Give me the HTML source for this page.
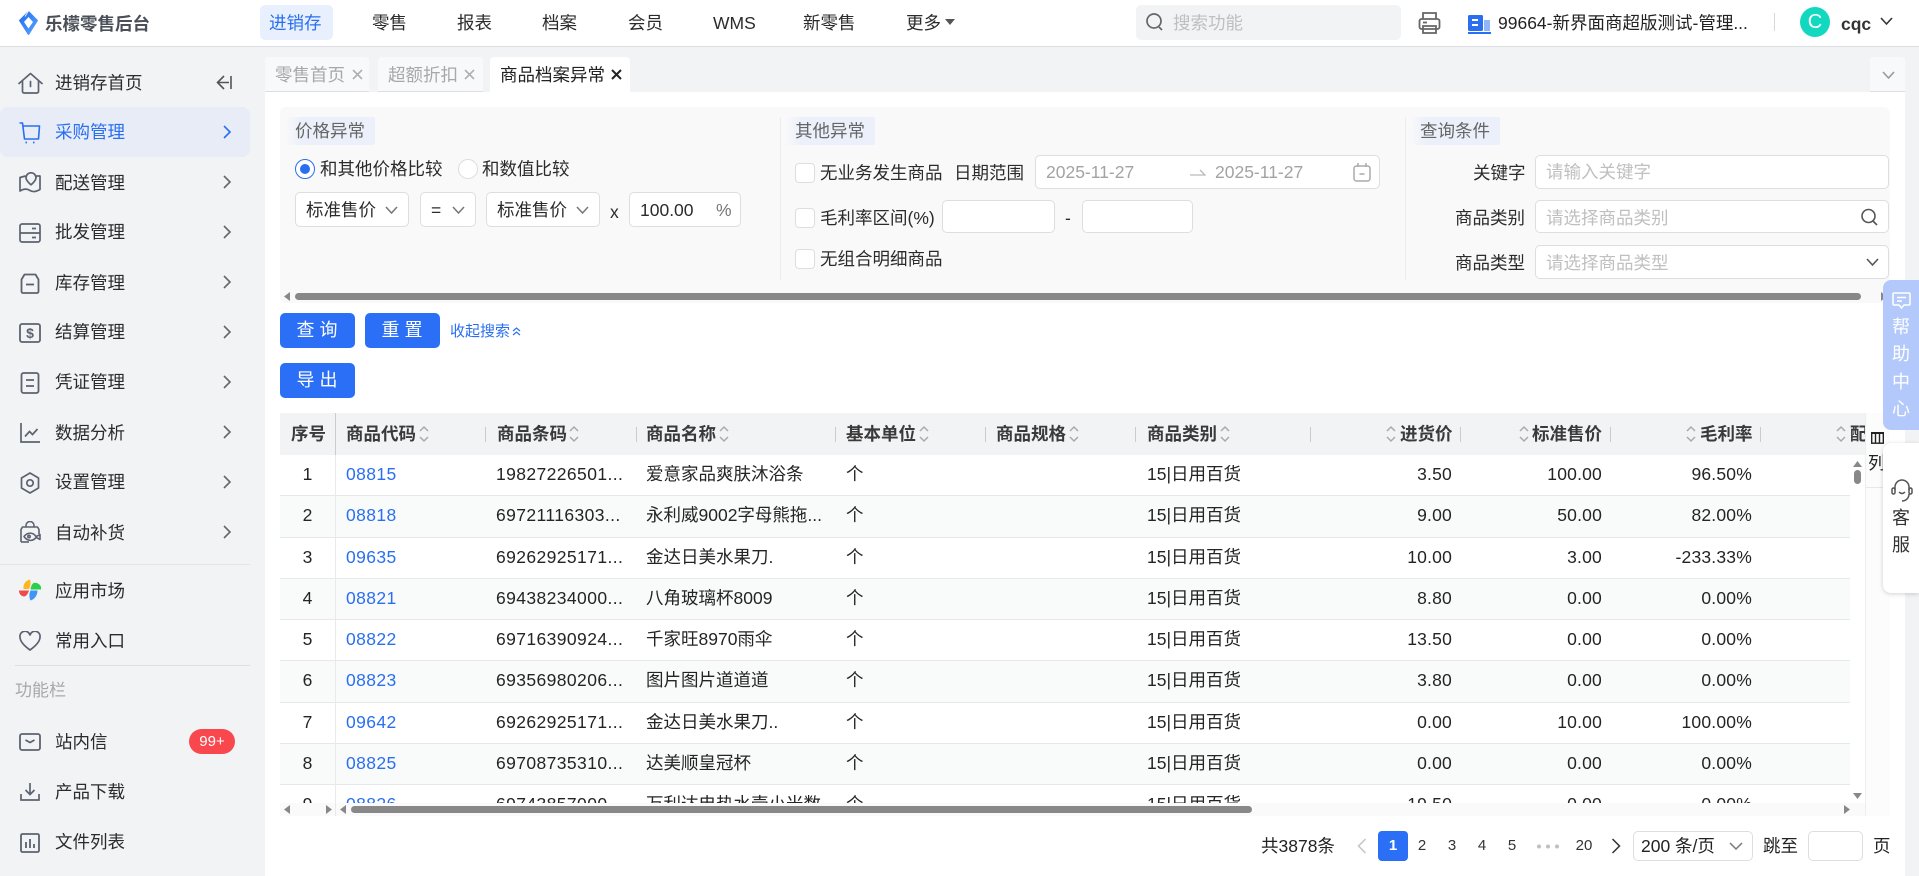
<!DOCTYPE html>
<html lang="zh-CN"><head><meta charset="utf-8"><title>乐檬零售后台</title>
<style>
*{box-sizing:border-box}
html,body{margin:0;padding:0;width:1919px;height:876px;overflow:hidden;background:#fff}
body{position:relative;font-family:"Liberation Sans","Noto Sans CJK SC",sans-serif;font-size:17.5px;color:#2b2b2b}
.t{position:absolute;line-height:24px;white-space:nowrap}
.b{position:absolute;background:#fff;border:1px solid #dcdee2;border-radius:5px}
.a{position:absolute;display:block}
.g{color:#a8a8a8}.ph{color:#bfbfbf}
.sec{position:absolute;top:117px;height:28px;background:linear-gradient(90deg,#f9f9fa,#ebf0fa 18%);border-radius:2px}
.chk{position:absolute;width:20px;height:20px;background:#fff;border:1px solid #dcdee2;border-radius:4px;left:795px}
.btn{position:absolute;width:75px;height:35px;background:#2a6ff5;border-radius:5px;color:#fff;text-align:center;line-height:35px;font-size:18px;letter-spacing:5px;text-indent:4px}
.th{position:absolute;top:0;height:42px;line-height:42px;font-weight:700;color:#3a3a3a;white-space:nowrap}
.sep{position:absolute;top:14px;width:1px;height:15px;background:#c8ccd2}
.r{position:absolute;left:0;width:1570px;height:41.25px;border-bottom:1px solid #e6e8eb;background:#fff}
.r.e{background:#f9fafa}
.r span{position:absolute;top:0;line-height:39px;white-space:nowrap;color:#242424}
.n{width:55px;left:0;text-align:center}
.c{left:66px;color:#2a6ff0!important;letter-spacing:.4px}
.d{left:216px;letter-spacing:.4px}
.m{left:366px}.u{left:566px}.k{left:867px}
.p1,.p2,.p3{text-align:right;width:120px;letter-spacing:.2px}
.p1{left:1052px}.p2{left:1202px}.p3{left:1352px}
.pg{position:absolute;top:834px;line-height:24px;font-size:15px;color:#333;text-align:center;width:30px}
.hc{position:absolute;left:1883px;width:36px;text-align:center;line-height:24px;font-size:18px}
</style></head><body>

<!-- header -->
<div style="position:absolute;left:0;top:46px;width:1919px;height:1px;background:#dcdee2"></div>
<svg class="a" style="left:19px;top:11px" width="19" height="24" viewBox="0 0 19 24"><defs><linearGradient id="lg" x1="0" y1="0" x2="1" y2="1"><stop offset="0" stop-color="#1f6cf0"/><stop offset="1" stop-color="#5aa5ff"/></linearGradient></defs><path d="M9.500 1 L18 9.500 L9.500 23 L1 9.500Z" fill="url(#lg)" stroke="url(#lg)" stroke-width="1.800" stroke-linejoin="round"/><path d="M9.500 6 L14 11 L9.500 17.500 L5 11Z" fill="#fff"/><path d="M9.500 0 L6 5.500" stroke="#fff" stroke-width=".8"/></svg>
<div class="t" style="left:45px;top:12px;font-weight:700;font-size:17.5px;color:#4a4f58">乐檬零售后台</div>
<div style="position:absolute;left:260px;top:5px;width:73px;height:35px;background:#e8f0fd;border-radius:5px"></div>
<div class="t" style="left:269px;top:11px;color:#2a6ff0">进销存</div>
<div class="t" style="left:372px;top:11px">零售</div>
<div class="t" style="left:457px;top:11px">报表</div>
<div class="t" style="left:542px;top:11px">档案</div>
<div class="t" style="left:628px;top:11px">会员</div>
<div class="t" style="left:713px;top:11px">WMS</div>
<div class="t" style="left:803px;top:11px">新零售</div>
<div class="t" style="left:906px;top:11px">更多</div>
<svg class="a" style="left:945px;top:19px" width="10" height="6"><path d="M0 0H10L5 6Z" fill="#555"/></svg>
<div style="position:absolute;left:1136px;top:5px;width:265px;height:35px;background:#f2f3f5;border-radius:5px"></div>
<svg class="a" style="left:1145px;top:12px" width="19" height="20" viewBox="0 0 19 20" fill="none" stroke="#666" stroke-width="1.700"><circle cx="9" cy="9" r="7"/><path d="M14 15l3 3"/></svg>
<div class="t ph" style="left:1173px;top:11px">搜索功能</div>
<svg class="a" style="left:1418px;top:11px" width="23" height="24" viewBox="0 0 23 24" fill="none" stroke="#666" stroke-width="1.800"><path d="M5 8V2h13v6"/><rect x="1.500" y="8" width="20" height="10" rx="2"/><path d="M5 15h13v7H5z"/><path d="M5 11.500h4"/></svg>
<svg class="a" style="left:1468px;top:14px" width="23" height="20" viewBox="0 0 23 20"><rect x="0" y="1" width="15" height="16" rx="1.500" fill="#2a6ff0"/><rect x="16" y="6" width="6" height="11" fill="#8fb6f8"/><rect x="0" y="18" width="23" height="2" fill="#2a6ff0"/><rect x="4" y="5" width="6" height="2" fill="#fff"/><rect x="4" y="10" width="6" height="2" fill="#fff"/></svg>
<div class="t" style="left:1498px;top:11px;color:#222">99664-新界面商超版测试-管理...</div>
<div style="position:absolute;left:1774px;top:13px;width:1px;height:18px;background:#d8d8d8"></div>
<div style="position:absolute;left:1800px;top:7px;width:30px;height:30px;border-radius:50%;background:#13d8c0;color:#fff;text-align:center;line-height:30px;font-size:20px">C</div>
<div class="t" style="left:1841px;top:12px;font-weight:700;color:#333">cqc</div>
<svg class="a" style="left:1880px;top:17px" width="13" height="9" viewBox="0 0 13 9" fill="none" stroke="#333" stroke-width="1.600"><path d="M1 1l5.500 6L12 1"/></svg>

<!-- sidebar -->
<div style="position:absolute;left:0;top:47px;width:265px;height:829px;background:#f2f3f5"></div>
<div style="position:absolute;left:0;top:107px;width:250px;height:50px;background:#e7ecf6;border-radius:8px"></div>

<svg class="a" style="left:18px;top:72px" width="25" height="22" viewBox="0 0 25 22" fill="none" stroke="#5c6270" stroke-width="1.700" stroke-linejoin="round" stroke-linecap="round"><path d="M1 11.500L12.500 1.500 24 11.500"/><path d="M4.500 9.500V19.500a1.500 1.500 0 0 0 1.500 1.500H19a1.500 1.500 0 0 0 1.500-1.500V9.500"/><path d="M12.500 9.500v5"/></svg>
<div class="t" style="left:55px;top:71px">进销存首页</div>
<svg class="a" style="left:216px;top:75px" width="16" height="15" viewBox="0 0 16 15" fill="none" stroke="#555" stroke-width="1.600"><path d="M8 1L1.500 7.500 8 14M1.500 7.500H13M15 1v13"/></svg>

<svg class="a" style="left:19px;top:122px" width="22" height="22" viewBox="0 0 22 22" fill="none" stroke="#2a6ff0" stroke-width="1.600" stroke-linejoin="round"><path d="M.5 1H3.500L5.500 17H19.500L20.500 4H4"/><path d="M6.500 20.500h1.500M14 20.500h1.500" stroke-width="1.800"/></svg>
<div class="t" style="left:55px;top:120px;color:#2a6ff0">采购管理</div>

<svg class="a" style="left:19px;top:172px" width="22" height="21" viewBox="0 0 22 21" fill="none" stroke="#5c6270" stroke-width="1.700" stroke-linejoin="round"><path d="M6.500 4L1 5.500V19C5 16.500 8 16.500 11 18.500 14.500 20.500 17.500 19.500 21 17.500V4H17.500"/><path d="M12 .8a5 5 0 0 0-5 5c0 3 5 7 5 7s5-4 5-7a5 5 0 0 0-5-5z"/></svg>
<div class="t" style="left:55px;top:171px">配送管理</div>

<svg class="a" style="left:19px;top:223px" width="22" height="20" viewBox="0 0 22 20" fill="none" stroke="#5c6270" stroke-width="1.700"><rect x="1" y="1" width="20" height="18" rx="2"/><path d="M1 10h20M13 5.500h4M13 14.500h4"/></svg>
<div class="t" style="left:55px;top:220px">批发管理</div>

<svg class="a" style="left:20px;top:273px" width="20" height="21" viewBox="0 0 20 21" fill="none" stroke="#5c6270" stroke-width="1.800" stroke-linejoin="round"><path d="M4.500 1.500h11l3 5v12a1.500 1.500 0 0 1-1.500 1.500H3a1.500 1.500 0 0 1-1.500-1.500v-12z"/><path d="M6 11.500h8"/></svg>
<div class="t" style="left:55px;top:271px">库存管理</div>

<svg class="a" style="left:19px;top:323px" width="22" height="20" viewBox="0 0 22 20" fill="none" stroke="#5c6270" stroke-width="1.800"><rect x="1" y="1" width="20" height="18" rx="2"/><text x="11" y="15" font-size="14" font-weight="700" fill="#5c6270" stroke="none" text-anchor="middle" font-family="Liberation Sans">$</text></svg>
<div class="t" style="left:55px;top:320px">结算管理</div>

<svg class="a" style="left:20px;top:372px" width="20" height="22" viewBox="0 0 20 22" fill="none" stroke="#5c6270" stroke-width="1.800"><rect x="1.500" y="1" width="17" height="20" rx="2"/><path d="M6 8h8M6 14h8"/></svg>
<div class="t" style="left:55px;top:370px">凭证管理</div>

<svg class="a" style="left:20px;top:423px" width="21" height="20" viewBox="0 0 21 20" fill="none" stroke="#5c6270" stroke-width="1.700"><path d="M1 0V19H20"/><path d="M5 13.500l4.500-5 3 3 5-5.500"/></svg>
<div class="t" style="left:55px;top:421px">数据分析</div>

<svg class="a" style="left:20px;top:472px" width="20" height="22" viewBox="0 0 20 22" fill="none" stroke="#5c6270" stroke-width="1.700" stroke-linejoin="round"><path d="M10 1l8.500 5v10L10 21l-8.500-5V6z"/><circle cx="10" cy="11" r="3.200"/></svg>
<div class="t" style="left:55px;top:470px">设置管理</div>

<svg class="a" style="left:19px;top:521px" width="22" height="22" viewBox="0 0 22 22" fill="none" stroke="#5c6270" stroke-width="1.600" stroke-linejoin="round"><path d="M7 6V4.500a4 4 0 0 1 8 0V6"/><path d="M2 21V8.500L3.500 6h15L20 8.500V13"/><path d="M2 21h8"/><path d="M5 15.500c3.500-4.500 9-4.500 12 0 1.500-.5 2.500-1.200 4-2v5c-1.500-.8-2.500-1.500-4-2-3 4-8.500 4-12-1z"/><circle cx="10" cy="15.500" r="1.200"/></svg>
<div class="t" style="left:55px;top:521px">自动补货</div>

<div style="position:absolute;left:0;top:564px;width:250px;height:1px;background:#e4e5e8"></div>

<svg class="a" style="left:19px;top:579px" width="22" height="22" viewBox="0 0 22 22"><path d="M10 10H4.500C4 5 6.500 1.500 11 .5 12 4 11.500 7 10 10Z" fill="#fbb81f"/><path d="M11.500 10.500C12 7 13 5 15 3.800 18 3.500 21 5 22 8V10.500Z" fill="#2ccf4c"/><path d="M10 11.500H0C0 15 2 17 5 17.500 7 17.500 9 15 10 11.500Z" fill="#f04b4b"/><path d="M11.500 11.500H18.500C18.500 16 16 20 11.500 21.500 10 18 10 15 11.500 11.500Z" fill="#3f96f5"/></svg>
<div class="t" style="left:55px;top:579px">应用市场</div>

<svg class="a" style="left:19px;top:631px" width="22" height="20" viewBox="0 0 22 20" fill="none" stroke="#5c6270" stroke-width="1.700"><path d="M11 19C4 14 1 10 1 6a5 5 0 0 1 10-1.500A5 5 0 0 1 21 6c0 4-3 8-10 13z"/></svg>
<div class="t" style="left:55px;top:629px">常用入口</div>

<div style="position:absolute;left:15px;top:665px;width:235px;height:1px;background:#dcdee2"></div>
<div class="t" style="left:15px;top:679px;color:#a8a8a8;font-size:17px">功能栏</div>

<svg class="a" style="left:19px;top:733px" width="22" height="18" viewBox="0 0 22 18" fill="none" stroke="#5c6270" stroke-width="1.800"><rect x="1" y="1" width="20" height="16" rx="2"/><path d="M6.500 7l4.500 2.500L15.500 7"/></svg>
<div class="t" style="left:55px;top:730px">站内信</div>
<div style="position:absolute;left:189px;top:729px;width:46px;height:25px;background:#f9474e;border-radius:13px;color:#fff;text-align:center;line-height:25px;font-size:15px">99+</div>

<svg class="a" style="left:20px;top:783px" width="20" height="18" viewBox="0 0 20 18" fill="none" stroke="#5c6270" stroke-width="1.700"><path d="M10 0v11M5.500 7l4.500 4.500L14.500 7"/><path d="M1 11v6h18v-6"/></svg>
<div class="t" style="left:55px;top:780px">产品下载</div>

<svg class="a" style="left:20px;top:833px" width="20" height="20" viewBox="0 0 20 20" fill="none" stroke="#5c6270" stroke-width="1.800"><rect x="1" y="1" width="18" height="18" rx="1.500"/><path d="M6 9v6M10 6v9M14 11v4"/></svg>
<div class="t" style="left:55px;top:830px">文件列表</div>

<!-- sidebar chevrons -->
<svg class="a" style="left:222px;top:123px" width="10" height="18" viewBox="0 0 10 18" fill="none" stroke="#2a6ff0" stroke-width="1.600"><path d="M2 3l6 6-6 6"/></svg>
<svg class="a" style="left:222px;top:173px" width="10" height="18" viewBox="0 0 10 18" fill="none" stroke="#666" stroke-width="1.600"><path d="M2 3l6 6-6 6"/></svg>
<svg class="a" style="left:222px;top:223px" width="10" height="18" viewBox="0 0 10 18" fill="none" stroke="#666" stroke-width="1.600"><path d="M2 3l6 6-6 6"/></svg>
<svg class="a" style="left:222px;top:273px" width="10" height="18" viewBox="0 0 10 18" fill="none" stroke="#666" stroke-width="1.600"><path d="M2 3l6 6-6 6"/></svg>
<svg class="a" style="left:222px;top:323px" width="10" height="18" viewBox="0 0 10 18" fill="none" stroke="#666" stroke-width="1.600"><path d="M2 3l6 6-6 6"/></svg>
<svg class="a" style="left:222px;top:373px" width="10" height="18" viewBox="0 0 10 18" fill="none" stroke="#666" stroke-width="1.600"><path d="M2 3l6 6-6 6"/></svg>
<svg class="a" style="left:222px;top:423px" width="10" height="18" viewBox="0 0 10 18" fill="none" stroke="#666" stroke-width="1.600"><path d="M2 3l6 6-6 6"/></svg>
<svg class="a" style="left:222px;top:473px" width="10" height="18" viewBox="0 0 10 18" fill="none" stroke="#666" stroke-width="1.600"><path d="M2 3l6 6-6 6"/></svg>
<svg class="a" style="left:222px;top:523px" width="10" height="18" viewBox="0 0 10 18" fill="none" stroke="#666" stroke-width="1.600"><path d="M2 3l6 6-6 6"/></svg>

<!-- tabs bar -->
<div style="position:absolute;left:265px;top:47px;width:1654px;height:45px;background:#f2f3f5"></div>
<div style="position:absolute;left:1905px;top:47px;width:14px;height:829px;background:#f2f3f5"></div>
<div style="position:absolute;left:265px;top:57px;width:104px;height:35px;background:#f8f9fa;border-bottom:1px solid #dcdee2;border-radius:4px 4px 0 0"></div>
<div class="t g" style="left:275px;top:63px">零售首页</div>
<svg class="a" style="left:352px;top:69px" width="11" height="11" stroke="#b0b0b0" stroke-width="1.600"><path d="M1 1l9 9M10 1l-9 9"/></svg>
<div style="position:absolute;left:378px;top:57px;width:105px;height:35px;background:#f8f9fa;border-bottom:1px solid #dcdee2;border-radius:4px 4px 0 0"></div>
<div class="t g" style="left:388px;top:63px">超额折扣</div>
<svg class="a" style="left:464px;top:69px" width="11" height="11" stroke="#b0b0b0" stroke-width="1.600"><path d="M1 1l9 9M10 1l-9 9"/></svg>
<div style="position:absolute;left:490px;top:57px;width:140px;height:35px;background:#fff;border-radius:4px 4px 0 0"></div>
<div class="t" style="left:500px;top:63px;color:#222">商品档案异常</div>
<svg class="a" style="left:611px;top:69px" width="11" height="11" stroke="#222" stroke-width="2"><path d="M1 1l9 9M10 1l-9 9"/></svg>
<div style="position:absolute;left:1870px;top:57px;width:35px;height:35px;background:#f8f9fa;border-bottom:1px solid #dcdee2;border-radius:4px 4px 0 0"></div>
<svg class="a" style="left:1882px;top:71px" width="13" height="9" fill="none" stroke="#999" stroke-width="1.600"><path d="M1 1l5.500 6L12 1"/></svg>

<!-- search panel -->
<div style="position:absolute;left:280px;top:107px;width:1610px;height:196px;background:#f9f9fa;border-radius:6px"></div>
<div class="sec" style="left:285px;width:90px"></div>
<div class="t" style="left:295px;top:119px;color:#666">价格异常</div>
<div class="sec" style="left:785px;width:90px"></div>
<div class="t" style="left:795px;top:119px;color:#666">其他异常</div>
<div class="sec" style="left:1410px;width:90px"></div>
<div class="t" style="left:1420px;top:119px;color:#666">查询条件</div>
<div style="position:absolute;left:780px;top:117px;width:1px;height:163px;background:#ececee"></div>
<div style="position:absolute;left:1405px;top:117px;width:1px;height:163px;background:#ececee"></div>

<div style="position:absolute;left:295px;top:159px;width:20px;height:20px;border-radius:50%;border:1.500px solid #2a6ff0;background:#fff"></div>
<div style="position:absolute;left:300px;top:164px;width:10px;height:10px;border-radius:50%;background:#2a6ff0"></div>
<div class="t" style="left:320px;top:157px">和其他价格比较</div>
<div style="position:absolute;left:458px;top:159px;width:20px;height:20px;border-radius:50%;border:1px solid #dcdee2;background:#fff"></div>
<div class="t" style="left:482px;top:157px">和数值比较</div>

<div class="b" style="left:295px;top:192px;width:114px;height:35px"></div>
<div class="t" style="left:306px;top:198px">标准售价</div>
<svg class="a" style="left:385px;top:206px" width="13" height="9" fill="none" stroke="#777" stroke-width="1.500"><path d="M1 1l5.500 6L12 1"/></svg>
<div class="b" style="left:420px;top:192px;width:56px;height:35px"></div>
<div class="t" style="left:431px;top:198px">=</div>
<svg class="a" style="left:452px;top:206px" width="13" height="9" fill="none" stroke="#777" stroke-width="1.500"><path d="M1 1l5.500 6L12 1"/></svg>
<div class="b" style="left:486px;top:192px;width:114px;height:35px"></div>
<div class="t" style="left:497px;top:198px">标准售价</div>
<svg class="a" style="left:576px;top:206px" width="13" height="9" fill="none" stroke="#777" stroke-width="1.500"><path d="M1 1l5.500 6L12 1"/></svg>
<div class="t" style="left:610px;top:200px">x</div>
<div class="b" style="left:629px;top:192px;width:112px;height:35px"></div>
<div class="t" style="left:640px;top:198px">100.00</div>
<div class="t" style="left:716px;top:198px;color:#777">%</div>

<div class="chk" style="top:163px"></div>
<div class="t" style="left:820px;top:161px">无业务发生商品</div>
<div class="t" style="left:954px;top:161px">日期范围</div>
<div class="b" style="left:1035px;top:155px;width:345px;height:34px"></div>
<div class="t" style="left:1046px;top:160px;color:#a3a3a3">2025-11-27</div>
<svg class="a" style="left:1190px;top:168px" width="16" height="9" fill="none" stroke="#bbb" stroke-width="1.300"><path d="M0 7h15L10 2"/></svg>
<div class="t" style="left:1215px;top:160px;color:#a3a3a3">2025-11-27</div>
<svg class="a" style="left:1353px;top:163px" width="18" height="19" viewBox="0 0 18 19" fill="none" stroke="#aaa" stroke-width="1.500"><rect x="1" y="3" width="16" height="15" rx="2.500"/><path d="M5 0v4M13 0v4M6.500 11h5"/></svg>

<div class="chk" style="top:208px"></div>
<div class="t" style="left:820px;top:206px">毛利率区间(%)</div>
<div class="b" style="left:942px;top:200px;width:113px;height:33px"></div>
<div class="t" style="left:1065px;top:206px">-</div>
<div class="b" style="left:1082px;top:200px;width:111px;height:33px"></div>

<div class="chk" style="top:249px"></div>
<div class="t" style="left:820px;top:247px">无组合明细商品</div>

<div class="t" style="left:1473px;top:161px">关键字</div>
<div class="b" style="left:1535px;top:155px;width:354px;height:34px"></div>
<div class="t ph" style="left:1546px;top:160px">请输入关键字</div>
<div class="t" style="left:1455px;top:206px">商品类别</div>
<div class="b" style="left:1535px;top:200px;width:354px;height:33px"></div>
<div class="t ph" style="left:1546px;top:206px">请选择商品类别</div>
<svg class="a" style="left:1860px;top:208px" width="19" height="18" viewBox="0 0 19 18" fill="none" stroke="#555" stroke-width="1.600"><circle cx="8.500" cy="8" r="6.500"/><path d="M13 13l4 4"/></svg>
<div class="t" style="left:1455px;top:251px">商品类型</div>
<div class="b" style="left:1535px;top:245px;width:354px;height:34px"></div>
<div class="t ph" style="left:1546px;top:251px">请选择商品类型</div>
<svg class="a" style="left:1866px;top:258px" width="13" height="9" fill="none" stroke="#555" stroke-width="1.600"><path d="M1 1l5.500 6L12 1"/></svg>

<!-- panel scrollbar -->
<div style="position:absolute;left:295px;top:293px;width:1566px;height:7px;background:#888;border-radius:4px"></div>
<svg class="a" style="left:284px;top:292px" width="6" height="9"><path d="M0 4.500L6 0V9Z" fill="#888"/></svg>
<svg class="a" style="left:1881px;top:292px" width="6" height="9"><path d="M6 4.500L0 0V9Z" fill="#888"/></svg>

<!-- buttons -->
<div class="btn" style="left:280px;top:313px">查询</div>
<div class="btn" style="left:365px;top:313px">重置</div>
<div class="t" style="left:450px;top:320px;color:#2a6ff0;font-size:15px">收起搜索</div>
<svg class="a" style="left:512px;top:327px" width="9" height="9" fill="none" stroke="#2a6ff0" stroke-width="1.200"><path d="M1 4l3.500-3L8 4M1 8l3.500-3L8 8"/></svg>
<div class="btn" style="left:280px;top:363px">导出</div>

<!-- table -->
<div style="position:absolute;left:1865px;top:413px;width:25px;height:403px;background:#fcfcfc"></div>
<div style="position:absolute;left:280px;top:413px;width:1585px;height:42px;background:#f2f3f5;overflow:hidden">
  <div class="th" style="left:11px">序号</div>
  <div style="position:absolute;left:55px;top:0;width:1px;height:42px;background:#c9ccd1"></div>
  <div class="th" style="left:66px">商品代码</div>
  <div class="sep" style="left:205px"></div>
  <div class="th" style="left:217px">商品条码</div>
  <div class="sep" style="left:356px"></div>
  <div class="th" style="left:366px">商品名称</div>
  <div class="sep" style="left:555px"></div>
  <div class="th" style="left:566px">基本单位</div>
  <div class="sep" style="left:705px"></div>
  <div class="th" style="left:716px">商品规格</div>
  <div class="sep" style="left:855px"></div>
  <div class="th" style="left:867px">商品类别</div>
  <div class="sep" style="left:1030px"></div>
  <div class="th" style="left:1120px">进货价</div>
  <div class="sep" style="left:1180px"></div>
  <div class="th" style="left:1252px">标准售价</div>
  <div class="sep" style="left:1330px"></div>
  <div class="th" style="left:1420px">毛利率</div>
  <div class="sep" style="left:1480px"></div>
  <div class="th" style="left:1570px">配</div>
  <svg class="a" style="left:139px;top:12px" width="10" height="18" fill="none" stroke="#aaa" stroke-width="1.500"><path d="M1 6l4-4 4 4M1 12l4 4 4-4"/></svg>
  <svg class="a" style="left:289px;top:12px" width="10" height="18" fill="none" stroke="#aaa" stroke-width="1.500"><path d="M1 6l4-4 4 4M1 12l4 4 4-4"/></svg>
  <svg class="a" style="left:439px;top:12px" width="10" height="18" fill="none" stroke="#aaa" stroke-width="1.500"><path d="M1 6l4-4 4 4M1 12l4 4 4-4"/></svg>
  <svg class="a" style="left:639px;top:12px" width="10" height="18" fill="none" stroke="#aaa" stroke-width="1.500"><path d="M1 6l4-4 4 4M1 12l4 4 4-4"/></svg>
  <svg class="a" style="left:789px;top:12px" width="10" height="18" fill="none" stroke="#aaa" stroke-width="1.500"><path d="M1 6l4-4 4 4M1 12l4 4 4-4"/></svg>
  <svg class="a" style="left:940px;top:12px" width="10" height="18" fill="none" stroke="#aaa" stroke-width="1.500"><path d="M1 6l4-4 4 4M1 12l4 4 4-4"/></svg>
  <svg class="a" style="left:1106px;top:12px" width="10" height="18" fill="none" stroke="#aaa" stroke-width="1.500"><path d="M1 6l4-4 4 4M1 12l4 4 4-4"/></svg>
  <svg class="a" style="left:1239px;top:12px" width="10" height="18" fill="none" stroke="#aaa" stroke-width="1.500"><path d="M1 6l4-4 4 4M1 12l4 4 4-4"/></svg>
  <svg class="a" style="left:1406px;top:12px" width="10" height="18" fill="none" stroke="#aaa" stroke-width="1.500"><path d="M1 6l4-4 4 4M1 12l4 4 4-4"/></svg>
  <svg class="a" style="left:1556px;top:12px" width="10" height="18" fill="none" stroke="#aaa" stroke-width="1.500"><path d="M1 6l4-4 4 4M1 12l4 4 4-4"/></svg>
</div>
<div style="position:absolute;left:280px;top:455px;width:1570px;height:348px;overflow:hidden">
<div class="r" style="top:0"><span class="n">1</span><span class="c">08815</span><span class="d">19827226501...</span><span class="m">爱意家品爽肤沐浴条</span><span class="u">个</span><span class="k">15|日用百货</span><span class="p1">3.50</span><span class="p2">100.00</span><span class="p3">96.50%</span></div>
<div class="r e" style="top:41.25px"><span class="n">2</span><span class="c">08818</span><span class="d">69721116303...</span><span class="m">永利威9002字母熊拖...</span><span class="u">个</span><span class="k">15|日用百货</span><span class="p1">9.00</span><span class="p2">50.00</span><span class="p3">82.00%</span></div>
<div class="r" style="top:82.5px"><span class="n">3</span><span class="c">09635</span><span class="d">69262925171...</span><span class="m">金达日美水果刀.</span><span class="u">个</span><span class="k">15|日用百货</span><span class="p1">10.00</span><span class="p2">3.00</span><span class="p3">-233.33%</span></div>
<div class="r e" style="top:123.75px"><span class="n">4</span><span class="c">08821</span><span class="d">69438234000...</span><span class="m">八角玻璃杯8009</span><span class="u">个</span><span class="k">15|日用百货</span><span class="p1">8.80</span><span class="p2">0.00</span><span class="p3">0.00%</span></div>
<div class="r" style="top:165px"><span class="n">5</span><span class="c">08822</span><span class="d">69716390924...</span><span class="m">千家旺8970雨伞</span><span class="u">个</span><span class="k">15|日用百货</span><span class="p1">13.50</span><span class="p2">0.00</span><span class="p3">0.00%</span></div>
<div class="r e" style="top:206.25px"><span class="n">6</span><span class="c">08823</span><span class="d">69356980206...</span><span class="m">图片图片道道道</span><span class="u">个</span><span class="k">15|日用百货</span><span class="p1">3.80</span><span class="p2">0.00</span><span class="p3">0.00%</span></div>
<div class="r" style="top:247.5px"><span class="n">7</span><span class="c">09642</span><span class="d">69262925171...</span><span class="m">金达日美水果刀..</span><span class="u">个</span><span class="k">15|日用百货</span><span class="p1">0.00</span><span class="p2">10.00</span><span class="p3">100.00%</span></div>
<div class="r e" style="top:288.75px"><span class="n">8</span><span class="c">08825</span><span class="d">69708735310...</span><span class="m">达美顺皇冠杯</span><span class="u">个</span><span class="k">15|日用百货</span><span class="p1">0.00</span><span class="p2">0.00</span><span class="p3">0.00%</span></div>
<div class="r" style="top:330px"><span class="n">9</span><span class="c">08826</span><span class="d">69743857000...</span><span class="m">万利达电热水壶小米数...</span><span class="u">个</span><span class="k">15|日用百货</span><span class="p1">19.50</span><span class="p2">0.00</span><span class="p3">0.00%</span></div>
<div style="position:absolute;left:55px;top:0;width:1px;height:348px;background:#e8eaec"></div>
</div>
<!-- table scrollbars -->
<div style="position:absolute;left:280px;top:803px;width:1585px;height:13px;background:#fafafa"></div>
<div style="position:absolute;left:335px;top:803px;width:1px;height:13px;background:#e8eaec"></div>
<div style="position:absolute;left:351px;top:806px;width:901px;height:7px;background:#888;border-radius:4px"></div>
<svg class="a" style="left:284px;top:805px" width="6" height="9"><path d="M0 4.500L6 0V9Z" fill="#888"/></svg>
<svg class="a" style="left:326px;top:805px" width="6" height="9"><path d="M6 4.500L0 0V9Z" fill="#888"/></svg>
<svg class="a" style="left:340px;top:805px" width="6" height="9"><path d="M0 4.500L6 0V9Z" fill="#888"/></svg>
<svg class="a" style="left:1844px;top:805px" width="6" height="9"><path d="M6 4.500L0 0V9Z" fill="#888"/></svg>
<svg class="a" style="left:1853px;top:461px" width="9" height="6"><path d="M4.500 0L9 6H0Z" fill="#888"/></svg>
<div style="position:absolute;left:1854px;top:470px;width:7px;height:14px;background:#888;border-radius:4px"></div>
<svg class="a" style="left:1853px;top:793px" width="9" height="6"><path d="M4.500 6L9 0H0Z" fill="#888"/></svg>
<div style="position:absolute;left:1865px;top:413px;width:1px;height:403px;background:#eceef0"></div>
<div style="position:absolute;left:1866px;top:487px;width:17px;height:1px;background:#e6e8eb"></div>
<svg class="a" style="left:1871px;top:432px" width="13" height="12" fill="none" stroke="#222" stroke-width="1.400"><rect x=".7" y="1.200" width="11.600" height="10"/><path d="M4.500 1v10M8.500 1v10"/><path d="M0 1h13" stroke-width="2"/></svg>
<div class="t" style="left:1868px;top:451px;width:15px;overflow:hidden;color:#222">列</div>

<!-- floating helpers -->
<div style="position:absolute;left:1883px;top:280px;width:36px;height:150px;background:#b3c8fb;border-radius:8px 0 0 8px"></div>
<svg class="a" style="left:1892px;top:292px" width="19" height="17" viewBox="0 0 19 17" fill="none" stroke="#fff" stroke-width="1.500"><path d="M2 1h15a1 1 0 0 1 1 1v10a1 1 0 0 1-1 1h-5l-2.500 3L7 13H2a1 1 0 0 1-1-1V2a1 1 0 0 1 1-1z"/><path d="M5 5.500h9M5 9h5"/></svg>
<div class="hc" style="top:315px;color:#fff">帮</div>
<div class="hc" style="top:342px;color:#fff">助</div>
<div class="hc" style="top:370px;color:#fff">中</div>
<div class="hc" style="top:397px;color:#fff">心</div>
<div style="position:absolute;left:1883px;top:443px;width:36px;height:150px;background:#fff;border-radius:8px 0 0 8px;box-shadow:0 1px 5px rgba(0,0,0,.18)"></div>
<svg class="a" style="left:1891px;top:479px" width="22" height="23" viewBox="0 0 22 23" fill="none" stroke="#555" stroke-width="1.500"><path d="M4 11V8a7 7 0 0 1 14 0v3"/><rect x="1" y="9" width="3" height="6" rx="1.500"/><rect x="18" y="9" width="3" height="6" rx="1.500"/><path d="M18 15c0 4-3 7-7 7M8 13c2 2 4 2 6 0"/></svg>
<div class="hc" style="top:506px;color:#333">客</div>
<div class="hc" style="top:533px;color:#333">服</div>

<!-- pagination -->
<div class="t" style="left:1261px;top:834px;color:#222">共3878条</div>
<svg class="a" style="left:1357px;top:838px" width="10" height="16" fill="none" stroke="#c4c4c4" stroke-width="1.500"><path d="M8.500 1L1.500 8l7 7"/></svg>
<div style="position:absolute;left:1378px;top:831px;width:30px;height:30px;background:#2a6ff5;border-radius:4px;color:#fff;font-weight:700;font-size:15px;line-height:30px;text-align:center">1</div>
<div class="pg" style="left:1407px">2</div>
<div class="pg" style="left:1437px">3</div>
<div class="pg" style="left:1467px">4</div>
<div class="pg" style="left:1497px">5</div>
<svg class="a" style="left:1536px;top:844px" width="24" height="5"><circle cx="3" cy="2.500" r="2" fill="#c0c0c0"/><circle cx="12" cy="2.500" r="2" fill="#c0c0c0"/><circle cx="21" cy="2.500" r="2" fill="#c0c0c0"/></svg>
<div class="pg" style="left:1569px">20</div>
<svg class="a" style="left:1611px;top:838px" width="10" height="16" fill="none" stroke="#333" stroke-width="1.500"><path d="M1.500 1l7 7-7 7"/></svg>
<div class="b" style="left:1633px;top:831px;width:120px;height:30px"></div>
<div class="t" style="left:1641px;top:834px;color:#222">200 条/页</div>
<svg class="a" style="left:1729px;top:842px" width="14" height="9" fill="none" stroke="#777" stroke-width="1.500"><path d="M1 1l6 6 6-6"/></svg>
<div class="t" style="left:1763px;top:834px;color:#222">跳至</div>
<div class="b" style="left:1808px;top:831px;width:55px;height:30px"></div>
<div class="t" style="left:1873px;top:834px;color:#222">页</div>
</body></html>
